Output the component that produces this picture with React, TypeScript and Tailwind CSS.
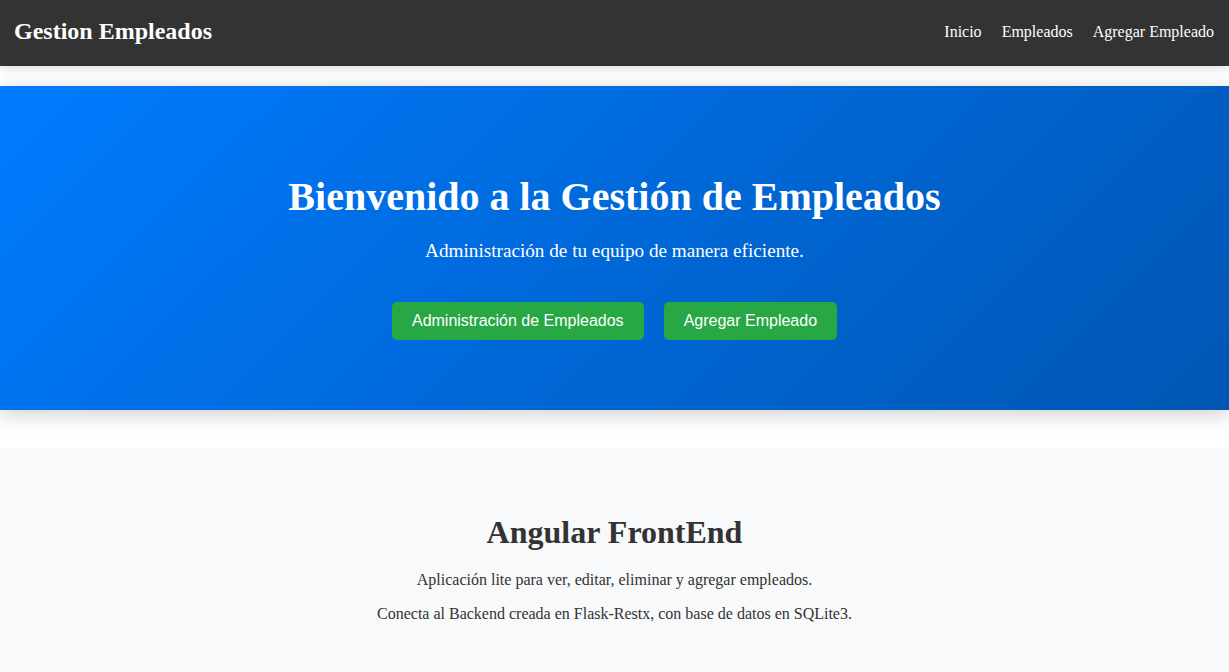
import React from "react";

interface navLink {
  label: string;
  route: string;
}

const links: navLink[] = [
  { label: "Inicio", route: "/" },
  { label: "Empleados", route: "/empleados" },
  { label: "Agregar Empleado", route: "/agregar" },
];

const serif = "font-['Liberation_Serif',_'Times_New_Roman',_serif]";

const Navbar = () => {
  return (
    <nav className="relative z-10 flex h-[66px] items-center justify-between bg-[#333333] px-[14px] pb-[4px] shadow-[0_2px_10px_rgba(0,0,0,0.15)]">
      <h1 className="text-[24px] font-bold text-white">Gestion Empleados</h1>
      <ul className="flex items-center gap-5 pr-px pt-[1px] text-[16px] text-white">
        {links.map((link) => (
          <li key={link.label}>
            <a href={link.route}>{link.label}</a>
          </li>
        ))}
      </ul>
    </nav>
  );
};

const Hero = () => {
  return (
    <section className="relative mt-5 bg-linear-135 from-[#007bff] to-[#0056b3] pt-[88px] pb-[70px] text-center text-white shadow-[0_4px_20px_rgba(0,0,0,0.2)]">
      <h2 className="text-[40px] leading-[46px] font-bold">Bienvenido a la Gestión de Empleados</h2>
      <p className="mt-[20px] text-[19.2px] leading-[22px]">Administración de tu equipo de manera eficiente.</p>
      <div className="mt-[40px] flex justify-center gap-5 font-['Liberation_Sans',_Arial,_sans-serif]">
        <button className="h-[38px] rounded-[5px] bg-[#28a745] px-5 text-[16px] text-white">
          Administración de Empleados
        </button>
        <button className="h-[38px] rounded-[5px] bg-[#28a745] px-5 text-[16px] text-white">
          Agregar Empleado
        </button>
      </div>
    </section>
  );
};

const About = () => {
  return (
    <section className="mt-[38px] flex-1 bg-[#f8f9fa] pt-[66px] pb-10 text-center text-[#333333]">
      <h2 className="text-[32px] leading-[37px] font-bold">Angular FrontEnd</h2>
      <p className="mt-[20px] text-[16px] leading-[18px]">
        Aplicación lite para ver, editar, eliminar y agregar empleados.
      </p>
      <p className="mt-[16px] text-[16px] leading-[18px]">
        Conecta al Backend creada en Flask-Restx, con base de datos en SQLite3.
      </p>
    </section>
  );
};

export default function App() {
  return (
    <div className={`flex min-h-[672px] flex-col bg-white ${serif}`}>
      <Navbar />
      <Hero />
      <About />
    </div>
  );
}
